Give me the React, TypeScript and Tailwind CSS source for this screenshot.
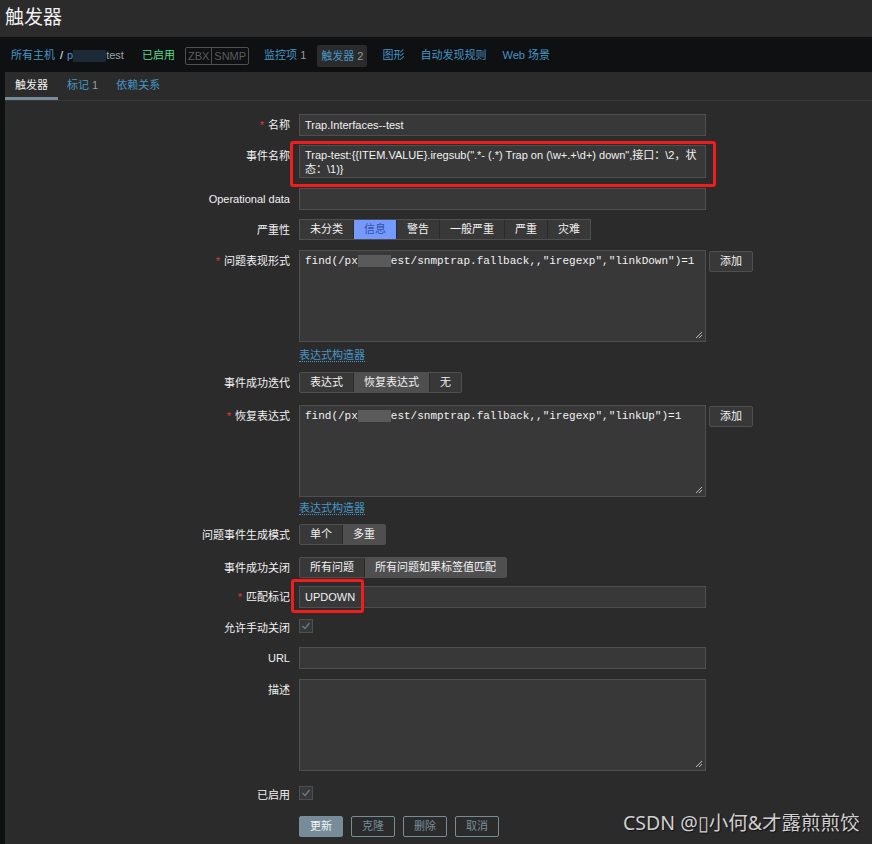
import React from 'react';

const font = { fontFamily: '"Liberation Sans", Arial, "Noto Sans CJK SC", sans-serif' };
const mono = { fontFamily: '"Liberation Mono", "Courier New", monospace' };

function Label({ text, required }: { text: string; required?: boolean }) {
  return (
    <div className="w-[285px] shrink-0 text-right text-[11px] leading-[22px] text-[#f2f2f2]">
      {required && <span className="mr-[4px] text-[#e33734]">*</span>}
      {text}
    </div>
  );
}

function Row({ label, required, className, children }: { label: string; required?: boolean; className?: string; children: React.ReactNode }) {
  return (
    <div className={`flex items-start ${className || ''}`}>
      <Label text={label} required={required} />
      <div className="ml-[9px]">{children}</div>
    </div>
  );
}

function Input({ value }: { value?: string }) {
  return (
    <div className="h-[22px] w-[407px] border border-[#4f4f4f] bg-[#383838] px-[5px] text-[11px] leading-[20px] text-[#f2f2f2]">
      {value}
    </div>
  );
}

function Resizer() {
  return (
    <svg className="absolute bottom-[2px] right-[2px]" width="8" height="8" viewBox="0 0 8 8">
      <path d="M1 7 L7 1 M4 7 L7 4" stroke="#bdbdbd" strokeWidth="1" />
    </svg>
  );
}

function TextArea({ children }: { children?: React.ReactNode }) {
  return (
    <div className="relative h-[92px] w-[407px] border border-[#4f4f4f] bg-[#383838] px-[5px] pt-[2px] text-[11px] leading-[16px] text-[#f2f2f2]" style={mono}>
      {children}
      <Resizer />
    </div>
  );
}

function Segmented({ items, active }: { items: string[]; active: number }) {
  return (
    <div className="flex h-[21px] rounded-[2px] border border-[#4f4f4f] bg-[#383838] text-[11px] leading-[19px] text-[#f2f2f2]">
      {items.map((it, i) => (
        <div
          key={it}
          className={`px-[10px] ${i > 0 ? 'border-l border-[#2b2b2b]' : ''} ${i === active ? 'bg-[#4f4f4f]' : ''}`}
        >
          {it}
        </div>
      ))}
    </div>
  );
}

function Check() {
  return (
    <div className="flex h-[14px] w-[14px] items-center justify-center border border-[#4f4f4f] bg-[#383838]">
      <svg width="10" height="10" viewBox="0 0 10 10">
        <path d="M1.5 5 L4 7.5 L8.5 2" stroke="#6b7d89" strokeWidth="1.2" fill="none" />
      </svg>
    </div>
  );
}

function Blur({ w, color }: { w: number; color: string }) {
  return <span className="inline-block h-[12px] align-middle" style={{ width: w, background: color }} />;
}

function Link() {
  return (
    <div className="h-[14px]">
      <span className="border-b border-dotted border-[#4796c4] text-[11px] leading-[13px] text-[#4796c4]">表达式构造器</span>
    </div>
  );
}

export default function App() {
  const severity = ['未分类', '信息', '警告', '一般严重', '严重', '灾难'];

  return (
    <div className="relative min-h-screen w-[872px] bg-[#0e1012]" style={font}>
      <div className="h-[37px] bg-[#2b2b2b] pl-[5px] text-[19px] leading-[35px] text-[#f2f2f2]">触发器</div>

      <div className="flex h-[35px] items-center pl-[11px] pt-[2px] text-[11px] text-[#4796c4]">
        <span>所有主机</span>
        <span className="ml-[5px] text-[#f2f2f2]">/</span>
        <span className="ml-[4px]">p</span>
        <Blur w={33} color="#1c2a38" />
        <span className="text-[#9aa5ad]">test</span>
        <span className="ml-[18px] text-[#59db8f]">已启用</span>
        <span className="ml-[10px] flex h-[18px] items-center rounded-[2px] border border-[#4f4f4f] text-[11px] leading-[16px] text-[#5c5c5c]">
          <span className="px-[2px]">ZBX</span>
          <span className="border-l border-[#4f4f4f] px-[2px]">SNMP</span>
        </span>
        <span className="ml-[15px]">
          监控项 <span className="text-[#9a9a9a]">1</span>
        </span>
        <span className="ml-[11px] rounded-[2px] bg-[#2b2b2b] px-[4px] leading-[22px]">
          触发器 <span className="text-[#9a9a9a]">2</span>
        </span>
        <span className="ml-[15px]">图形</span>
        <span className="ml-[16px]">自动发现规则</span>
        <span className="ml-[16px]">Web 场景</span>
      </div>

      <div className="ml-[5px] bg-[#2b2b2b]">
        <div className="flex h-[29px] items-end border-b border-[#383838] text-[11px]">
          <div className="border-b-[3px] border-[#768d99] px-[10px] pb-[4px] text-[#f2f2f2]">触发器</div>
          <div className="px-[9px] pb-[7px] text-[#4796c4]">
            标记 <span className="text-[#9a9a9a]">1</span>
          </div>
          <div className="px-[9px] pb-[7px] text-[#4796c4]">依赖关系</div>
        </div>

        <div className="pb-[8px] pt-[13px]">
          <Row label="名称" required>
            <Input value="Trap.Interfaces--test" />
          </Row>

          <Row label="事件名称" className="mt-[9px]">
            <div className="relative">
              <div className="h-[33px] w-[407px] whitespace-nowrap border border-[#4f4f4f] bg-[#383838] px-[5px] pt-[2px] text-[11px] leading-[14px] text-[#f2f2f2]">
                Trap-test:{'{'}{'{'}ITEM.VALUE{'}'}.iregsub(".*- (.*) Trap on (\w+.+\d+) down",接口：\2，状
                <br />
                态：\1){'}'}
              </div>
              <div className="pointer-events-none absolute left-[-9px] top-[-4px] h-[46px] w-[426px] rounded-[3px] border-[3px] border-[#f01d1d]" />
            </div>
          </Row>

          <Row label="Operational data" className="mt-[10px]">
            <Input />
          </Row>

          <Row label="严重性" className="mt-[9px]">
            <div className="flex h-[21px] border border-[#4f4f4f] bg-[#383838] text-[11px] leading-[19px] text-[#f2f2f2]">
              {severity.map((s, i) => (
                <div
                  key={s}
                  className={`px-[10px] ${i > 0 ? 'border-l border-[#2b2b2b]' : ''} ${i === 1 ? 'bg-[#7499ff] text-[#33519f]' : ''}`}
                >
                  {s}
                </div>
              ))}
            </div>
          </Row>

          <Row label="问题表现形式" required className="mt-[9px]">
            <div className="flex items-start">
              <TextArea>
                find(/px<Blur w={33} color="#5a5a5a" />est/snmptrap.fallback,,"iregexp","linkDown")=1
              </TextArea>
              <div className="ml-[3px] mt-[1px] h-[21px] rounded-[2px] border border-[#4f4f4f] bg-[#383838] px-[10px] text-[11px] leading-[19px] text-[#f2f2f2]" style={font}>
                添加
              </div>
            </div>
            <div className="mt-[0px]">
              <Link />
            </div>
          </Row>

          <Row label="事件成功迭代" className="mt-[16px]">
            <Segmented items={['表达式', '恢复表达式', '无']} active={1} />
          </Row>

          <Row label="恢复表达式" required className="mt-[11px]">
            <div className="flex items-start">
              <TextArea>
                find(/px<Blur w={33} color="#5a5a5a" />est/snmptrap.fallback,,"iregexp","linkUp")=1
              </TextArea>
              <div className="ml-[3px] mt-[1px] h-[21px] rounded-[2px] border border-[#4f4f4f] bg-[#383838] px-[10px] text-[11px] leading-[19px] text-[#f2f2f2]">
                添加
              </div>
            </div>
            <div className="mt-[-2px]">
              <Link />
            </div>
          </Row>

          <Row label="问题事件生成模式" className="mt-[15px]">
            <Segmented items={['单个', '多重']} active={1} />
          </Row>

          <Row label="事件成功关闭" className="mt-[11px]">
            <Segmented items={['所有问题', '所有问题如果标签值匹配']} active={1} />
          </Row>

          <Row label="匹配标记" required className="mt-[7px]">
            <div className="relative">
              <Input value="UPDOWN" />
              <div className="pointer-events-none absolute left-[-8px] top-[-7px] h-[34px] w-[73px] rounded-[3px] border-[3px] border-[#f01d1d]" />
            </div>
          </Row>

          <Row label="允许手动关闭" className="mt-[9px]">
            <div className="pt-[2px]">
              <Check />
            </div>
          </Row>

          <Row label="URL" className="mt-[8px]">
            <Input />
          </Row>

          <Row label="描述" className="mt-[10px]">
            <TextArea />
          </Row>

          <Row label="已启用" className="mt-[13px]">
            <div className="pt-[2px]">
              <Check />
            </div>
          </Row>

          <div className="ml-[294px] mt-[10px] flex gap-[8px] text-[11px] leading-[19px]">
            <div className="h-[21px] rounded-[2px] border border-[#768d99] bg-[#768d99] px-[10px] text-[#f2f2f2]">更新</div>
            <div className="h-[21px] rounded-[2px] border border-[#768d99] px-[10px] text-[#768d99]">克隆</div>
            <div className="h-[21px] rounded-[2px] border border-[#768d99] px-[10px] text-[#768d99]">删除</div>
            <div className="h-[21px] rounded-[2px] border border-[#768d99] px-[10px] text-[#768d99]">取消</div>
          </div>
        </div>
      </div>

      <div className="pointer-events-none absolute left-[623px] top-[809px] text-[19.5px] leading-[28px] text-[#d0d0d0] [text-shadow:1px_1px_1px_#111]" style={{ fontFamily: '"Noto Sans", "Noto Sans CJK SC", sans-serif' }}>
        CSDN @▯小何&amp;才露煎煎饺
      </div>
    </div>
  );
}
